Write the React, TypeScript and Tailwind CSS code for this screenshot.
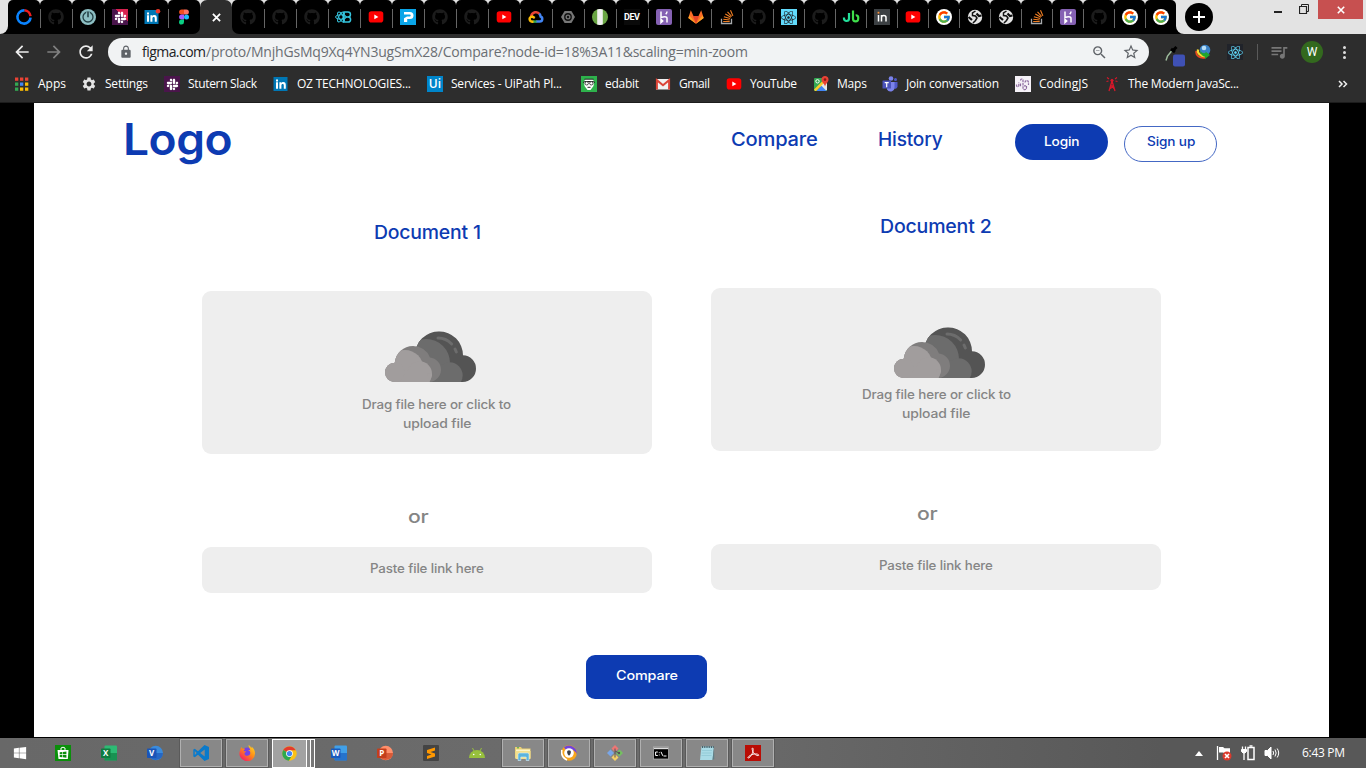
import React, { useLayoutEffect, useRef } from "react";
import { FaGithub, FaSlack, FaReact, FaWindows } from "react-icons/fa";
import { FcGoogle } from "react-icons/fc";
import { MdSettings, MdLock, MdStarBorder, MdZoomOut, MdArrowBack, MdArrowForward, MdRefresh, MdQueueMusic } from "react-icons/md";

/* Tracks a single line of text so that it fills the given width. */
function Fit({ w, className = "", children }: { w: number; className?: string; children: string }) {
  const ref = useRef<HTMLSpanElement>(null);
  useLayoutEffect(() => {
    const fit = () => {
      const el = ref.current;
      if (!el) return;
      el.style.letterSpacing = "0px";
      el.style.marginRight = "0px";
      const ls = (w - el.getBoundingClientRect().width) / Math.max(1, children.length - 1);
      el.style.letterSpacing = `${ls}px`;
      el.style.marginRight = `${-ls}px`;
    };
    fit();
    document.fonts?.ready.then(fit);
  }, [w, children]);
  return (
    <span ref={ref} className={`inline-block shrink-0 whitespace-pre ${className}`}>
      {children}
    </span>
  );
}

/* Widens the glyphs themselves, for the round geometric headings and labels. */
function Wide({ w, children }: { w: number; children: string }) {
  const ref = useRef<HTMLSpanElement>(null);
  useLayoutEffect(() => {
    const fit = () => {
      const el = ref.current;
      if (el) el.style.transform = `scaleX(${w / el.offsetWidth})`;
    };
    fit();
    document.fonts?.ready.then(fit);
  }, [w, children]);
  return (
    <span className="block shrink-0 text-left" style={{ width: w }}>
      <span ref={ref} className="inline-block origin-left whitespace-pre tracking-[-0.01em]">
        {children}
      </span>
    </span>
  );
}

const Github = () => <FaGithub className="size-4 text-[#1c1c1c]" />;
const Youtube = () => (
  <svg viewBox="0 0 16 16" className="size-4">
    <rect x="0.7" y="2.2" width="14.6" height="11.4" rx="2.8" fill="#f00" />
    <path d="M6.3 5.6 10.4 7.9 6.3 10.2Z" fill="#fff" />
  </svg>
);
const Slack = () => (
  <span className="flex size-4 items-center justify-center bg-[#4a154b]">
    <FaSlack className="size-[13px] text-white" />
  </span>
);
const SlackAlert = () => (
  <span className="flex size-4 items-center justify-center bg-[linear-gradient(45deg,#4a154b_62%,#d7224f_62%)]">
    <FaSlack className="size-[13px] text-white" />
  </span>
);
const Linkedin = ({ dot = false }: { dot?: boolean }) => (
  <svg viewBox="0 0 16 16" className="size-4 overflow-visible">
    <rect x="0.5" y="1" width="14" height="14" fill="#0077b5" />
    <path d="M3 6.3h2V12.7H3ZM3 3.4h2v2H3ZM6.4 6.3h1.9v.9c.5-.8 1.2-1.1 2-1.1 1.8 0 2.5 1.100 2.500 2.900v3.700h-2V9.500c0-1-.3-1.600-1.100-1.600-.9 0-1.300.6-1.300 1.600v3.200h-2Z" fill="#fff" />
    {dot && <circle cx="14" cy="2.300" r="2.300" fill="#ee3a2d" />}
  </svg>
);
const Figma = () => (
  <svg viewBox="0 0 16 16" className="size-4">
    <path d="M8 .6H5.600a2.500 2.500 0 0 0 0 5H8Z" fill="#f24e1e" />
    <path d="M8 .6h2.400a2.500 2.500 0 0 1 0 5H8Z" fill="#ff7262" />
    <path d="M8 5.600H5.600a2.500 2.500 0 0 0 0 5H8Z" fill="#a259ff" />
    <circle cx="10.500" cy="8.100" r="2.500" fill="#1abcfe" />
    <path d="M8 10.600H5.600a2.500 2.500 0 1 0 2.400 2.500Z" fill="#0acf83" />
  </svg>
);
const Ring = () => (
  <svg viewBox="0 0 18 18" className="size-[18px]">
    <circle cx="9" cy="9" r="6.600" fill="none" stroke="#0a84ff" strokeWidth="2.600" strokeDasharray="31 10.470" transform="rotate(5 9 9)" />
    <path d="M9.500 2.300a6.600 6.600 0 0 1 6 5.800" fill="none" stroke="#f01c1c" strokeWidth="2.600" />
  </svg>
);
const Power = () => (
  <svg viewBox="0 0 16 16" className="size-4">
    <circle cx="8" cy="8" r="8" fill="#8dbfc3" />
    <circle cx="8" cy="8" r="5" fill="none" stroke="#234146" strokeWidth="1.300" />
    <path d="M8 2.500v6" stroke="#8dbfc3" strokeWidth="3.500" />
    <path d="M8 2.800v5.500" stroke="#203b40" strokeWidth="1.500" />
  </svg>
);
const BootReact = () => (
  <svg viewBox="0 0 18 16" className="h-4 w-[18px]" fill="none" stroke="#35c4dd">
    <ellipse cx="6" cy="8" rx="5.500" ry="2.200" transform="rotate(60 6 8)" />
    <ellipse cx="6" cy="8" rx="5.500" ry="2.200" transform="rotate(-60 6 8)" />
    <ellipse cx="6" cy="8" rx="5.500" ry="2.200" />
    <path d="M8.500 3h4.500a2.400 2.400 0 0 1 0 4.900H8.500M13 7.900a2.600 2.600 0 0 1 0 5.200H8.500V3" strokeWidth="1.500" />
  </svg>
);
const Pandora = () => (
  <svg viewBox="0 0 16 16" className="size-4">
    <path d="M0 0H16V16H0Z" fill="#0aa5e8" />
    <path d="M4 3h6a3.500 3.500 0 0 1 0 7H7.200v3H4V9.300L7 7.500h2.700a1 1 0 0 0 0-2H4Z" fill="#fff" />
  </svg>
);
const CloudLogo = () => (
  <svg viewBox="0 0 16 16" className="size-4" fill="none" strokeWidth="2.500">
    <path d="M3.200 7.200C4 2.800 9.500 1.800 11.600 5.200" stroke="#ea4335" />
    <path d="M11.200 4.800C12.600 6 12.500 7 12.600 7.500 15 8.500 14.800 12.600 11.800 12.600H8" stroke="#4285f4" />
    <path d="M8.500 12.600H4.500" stroke="#34a853" />
    <path d="M5.500 12.600C.8 13 .3 7.800 4.400 7.600L6.800 9" stroke="#fbbc05" />
  </svg>
);
const Hexagon = () => (
  <svg viewBox="0 0 16 16" className="size-4">
    <path d="M4.600 2h6.800L15 8l-3.600 6H4.600L1 8Z" fill="#777" />
    <circle cx="8" cy="8" r="3.200" fill="none" stroke="#111" strokeWidth="1.400" />
    <circle cx="8" cy="8" r="1.200" fill="#111" />
  </svg>
);
const Striped = () => (
  <svg viewBox="0 0 16 16" className="size-4">
    <circle cx="8" cy="8" r="8" fill="#6aa544" />
    <path d="M5.200.5a8 8 0 0 1 5.600 0v15a8 8 0 0 1-5.600 0Z" fill="#f0f0f0" />
  </svg>
);
const Dev = () => (
  <span className="flex size-4 items-center justify-center bg-[#0a0a0a] font-['Roboto',sans-serif] text-[9px] leading-none font-bold text-white">
    <Fit w={16}>DEV</Fit>
  </span>
);
const Heroku = () => (
  <svg viewBox="0 0 16 16" className="size-4">
    <rect width="16" height="16" rx="2" fill="#8561b3" />
    <path d="M5 2.500v6c2-.8 6-1.500 6 .8v4.200M5 10.500v3l1.700-1.500ZM11 2.500c0 1.200-.5 2-1.300 2.800" stroke="#fff" strokeWidth="1.500" fill="none" />
  </svg>
);
const Gitlab = () => (
  <svg viewBox="0 0 16 16" className="size-4">
    <path d="M.3 9 2.800 1.300 5.500 7h5l2.700-5.700L15.700 9 8 14.800Z" fill="#fc6d26" />
    <path d="M5 7h6l-3 7.800Z" fill="#e24329" />
    <path d="M.3 9 1.500 6.500 8 14.800ZM15.700 9 14.500 6.500 8 14.800Z" fill="#fca326" />
  </svg>
);
const Stack = () => (
  <svg viewBox="0 0 16 16" className="size-4" fill="none">
    <path d="M2.500 9.800v4.700h10V9.800" stroke="#a7a9ab" strokeWidth="1.300" />
    <path d="M4.200 12.500h6.500M4.300 10.300l6.400.7M4.900 7.800l6.200 1.700M6.300 5.100l5.600 3.200M8.500 2.800l4.200 4.700M11.500 1.200l2.400 5.700" stroke="#f48024" strokeWidth="1.100" />
  </svg>
);
const ReactTile = () => (
  <span className="flex size-4 items-center justify-center bg-[#61dafb]">
    <FaReact className="size-[15px] text-[#20232a]" />
  </span>
);
const Ub = () => (
  <svg viewBox="0 0 18 16" className="h-4 w-[18px]" fill="none" strokeWidth="2.200">
    <path d="M2 8.500v1a2.500 2.500 0 0 0 5 0V4" stroke="#23e09b" />
    <path d="M11 1.500v8.200a2.600 2.600 0 0 0 5.200 0V8a2 2 0 0 0-2.500-1.500" stroke="#3fdf4b" />
  </svg>
);
const In = () => (
  <svg viewBox="0 0 16 16" className="size-4" fill="none">
    <rect width="16" height="16" fill="#3c4043" />
    <path d="M4.500 6v6.500M7.500 12.500V6M7.500 8.500c0-2.800 4.500-2.800 4.500 0v4" stroke="#fff" strokeWidth="1.500" />
    <rect x="3.600" y="2.800" width="1.800" height="1.800" fill="#f48c36" />
  </svg>
);
const Google = () => (
  <span className="flex size-4 items-center justify-center rounded-full bg-white">
    <FcGoogle className="size-[14px]" />
  </span>
);
const Globe = () => (
  <svg viewBox="0 0 16 16" className="size-4">
    <circle cx="8" cy="8" r="7.200" fill="#e4e4e4" />
    <path d="M8.500 2 5.500 4v2.500l3 .5 1.500 2-1.500 2.500L6 14" stroke="#111" strokeWidth="1.500" fill="none" />
    <path d="M9.500 4.500 12 7l2.500-.5M1.500 8 5 11" stroke="#111" strokeWidth="2.200" fill="none" />
  </svg>
);

const G = Github;
const wideTabs = [Ring, G, Power, SlackAlert, () => <Linkedin dot />, Figma, null, G, G, G, BootReact, Youtube, Pandora, G, G, Youtube, CloudLogo, Hexagon, Striped, Dev, Heroku];
const slimTabs = [Gitlab, Stack, G, ReactTile, G, Ub, In, Youtube, Google, Globe, Globe, Stack, Heroku, G, Google, Google];

function Tab({ icon: Icon, slim, sep, corner = "" }: { icon: React.FC | null; slim?: boolean; sep: boolean; corner?: string }) {
  const width = slim ? "w-[31px]" : "w-8";
  if (!Icon)
    return (
      <div className={`flex h-[34px] shrink-0 items-center justify-center rounded-t-[7px] bg-[#2d2d2d] ${width}`}>
        <svg viewBox="0 0 10 10" className="ml-px size-[9px]" stroke="#fff" strokeWidth="2">
          <path d="M1 1 9 9M9 1 1 9" />
        </svg>
      </div>
    );
  return (
    <div className={`relative flex h-[34px] shrink-0 items-center justify-center rounded-t-[5px] bg-black ${width} ${corner}`}>
      <Icon />
      {sep && <span className="absolute top-[9px] right-[-1px] z-10 h-[19px] w-px bg-[#666]" />}
    </div>
  );
}

function TabStrip() {
  return (
    <div className="flex h-[34px] shrink-0 items-start bg-[#e3e3e3]">
      <div className="h-[34px] w-2 bg-black"><div className="h-full rounded-br-[8px] bg-[#e3e3e3]" /></div>
      <div className="flex">
        {wideTabs.map((I, i) => (
          <div key={i} className={i === 5 || i === 7 ? "bg-[linear-gradient(#e3e3e3_12px,#2d2d2d_12px)]" : "bg-[linear-gradient(#e3e3e3_12px,#000_12px)]"}>
            <Tab icon={I} sep={i !== 5 && i !== 6} corner={i === 5 ? "rounded-br-[7px]" : i === 7 ? "rounded-bl-[7px]" : ""} />
          </div>
        ))}
        {slimTabs.map((I, i) => (
          <Tab key={i} icon={I} slim sep={i !== 15} />
        ))}
      </div>
      <div className="h-[34px] w-[9px] bg-black"><div className="h-full rounded-bl-[8px] bg-[#e3e3e3]" /></div>
      <div className="mt-[3px] flex size-7 items-center justify-center rounded-full bg-black">
        <svg viewBox="0 0 12 12" className="size-3" stroke="#fff" strokeWidth="2"><path d="M6 0V12M0 6H12" /></svg>
      </div>
      <div className="ml-[61px] h-[13px] w-2 border-b-2 border-[#222]" />
      <svg viewBox="0 0 10 10" className="mt-1 ml-[17px] size-[10px]" fill="none" stroke="#222">
        <path d="M2.500 2V.5h7v7H8" /><path d="M.5 2.500h7v7h-7Z" strokeWidth="1.200" />
      </svg>
      <div className="ml-[9px] flex h-[19px] w-[45px] items-center justify-center bg-[#c75050]">
        <svg viewBox="0 0 10 10" className="size-2" stroke="#fff" strokeWidth="2"><path d="M1 1 9 9M9 1 1 9" /></svg>
      </div>
    </div>
  );
}

function Toolbar() {
  return (
    <div className="flex h-9 items-center">
      <MdArrowBack className="ml-3 size-5 text-[#eee]" />
      <MdArrowForward className="ml-3 size-5 text-[#808080]" />
      <MdRefresh className="ml-3 size-5 text-[#eee]" />
      <div className="ml-3 flex h-7 w-[1041px] items-center rounded-full bg-[#f1f3f4]">
        <MdLock className="ml-[11px] size-[14px] text-[#5f6368]" />
        <div className="ml-[9px] flex font-['Open_Sans','Noto_Sans',sans-serif] text-[14px] leading-7">
          <Fit w={64} className="text-[#202124]">figma.com</Fit>
          <Fit w={542} className="text-[#6a6e73]">/proto/MnjhGsMq9Xq4YN3ugSmX28/Compare?node-id=18%3A11&scaling=min-zoom</Fit>
        </div>
        <MdZoomOut className="ml-auto size-[17px] text-[#5f6368]" />
        <MdStarBorder className="mr-[9px] ml-[14px] size-[18px] text-[#5f6368]" />
      </div>
      <div className="ml-4 flex w-5 items-end self-stretch pb-[2px]">
        <svg viewBox="0 0 20 22" className="h-[22px] w-5">
          <rect x="8" y="8.500" width="12" height="12" rx="2" fill="#3f51b5" />
          <path d="M1 14.500 2.500 10 7 4.500" stroke="#9dbb9c" strokeWidth="1.500" fill="none" />
          <path d="M6 3l4 3M8 4.500 11.500 1" stroke="#000" strokeWidth="3" />
        </svg>
      </div>
      <svg viewBox="0 0 16 16" className="ml-[10px] size-4">
        <circle cx="10" cy="6" r="5.300" fill="#3980c4" /><circle cx="9" cy="4" r="2.300" fill="#b5dcf5" />
        <path d="M1.300 7c-1 5 4 7.500 9 6.500" stroke="#e74a1f" strokeWidth="1.800" fill="none" />
        <path d="M3 5.500c-1 4 3 7 7 6.500" stroke="#f2dc32" strokeWidth="2.200" fill="none" />
        <path d="M5.500 6c.5 3 3 3.500 5 3V7.500l4.500 3.500-5 4v-2.200C7 12 5 9.500 5.500 6Z" fill="#20a52e" />
      </svg>
      <span className="ml-4 flex size-4 items-center justify-center bg-[#20232a]"><FaReact className="size-[15px] text-[#61dafb]" /></span>
      <div className="ml-[14px] h-4 w-px bg-[#5a5a5a]" />
      <MdQueueMusic className="ml-[11px] size-5 text-[#777]" />
      <div className="ml-[12px] flex size-[22px] items-center justify-center rounded-full bg-[#33691e] font-['Roboto',sans-serif] text-[12px] text-white">W</div>
      <div className="ml-[20px] flex flex-col gap-[2px]">
        <span className="size-[3px] rounded-full bg-[#ddd]" /><span className="size-[3px] rounded-full bg-[#ddd]" /><span className="size-[3px] rounded-full bg-[#ddd]" />
      </div>
    </div>
  );
}

const AppsIcon = () => (
  <svg viewBox="0 0 16 16" className="size-4">
    {["#ea4335", "#ea4335", "#ea4335", "#34a853", "#4285f4", "#fbbc05", "#34a853", "#fbbc05", "#fbbc05"].map((c, i) => (
      <rect key={i} x={1 + (i % 3) * 5} y={1.5 + Math.floor(i / 3) * 5} width="3.300" height="3.300" fill={c} />
    ))}
  </svg>
);
const UiPath = () => (
  <span className="flex size-4 items-center justify-center bg-[#0085ca] font-['Open_Sans',sans-serif] text-[12px] leading-none font-semibold text-white">Ui</span>
);
const Edabit = () => (
  <svg viewBox="0 0 16 16" className="size-4">
    <rect width="16" height="16" fill="#2eb24c" />
    <path d="M3 5.500 4.500 3h7L13 5.500 12.500 10 9.500 14h-3L3.500 10Z" fill="#fff" />
    <path d="M2 6.500 4 5.500h8l2 1M3.500 3.200h9" stroke="#222" fill="none" />
    <circle cx="5.700" cy="7.300" r="1.700" fill="#fff" stroke="#222" strokeWidth=".8" /><circle cx="10.300" cy="7.300" r="1.700" fill="#fff" stroke="#222" strokeWidth=".8" />
    <path d="M6.500 11.300h3" stroke="#222" />
  </svg>
);
const Gmail = () => (
  <svg viewBox="0 0 16 16" className="size-4">
    <path d="M1 3h14v10.500H1Z" fill="#f2f2f2" />
    <path d="M1.900 13.500V4.200L8 9.200l6.100-5v9.300" fill="none" stroke="#dc4437" strokeWidth="2" />
  </svg>
);
const Maps = () => (
  <svg viewBox="0 0 16 16" className="size-4">
    <rect x="1" y="2" width="13" height="13" rx="1" fill="#34a853" />
    <path d="M8 8 14 3v11l-2 1-5-5Z" fill="#e8e8e8" /><path d="M3.500 15 8.500 9.700l5 5.300Z" fill="#4285f4" /><path d="M1 13.500 11 3.500l1.500 2L3.200 15H2Z" fill="#fbcb2f" />
    <circle cx="4.500" cy="5.300" r="1.700" fill="none" stroke="#fff" />
    <path d="M12 0a3.500 3.500 0 0 0-3.500 3.700C8.500 6 11 7 12 10.500c1-3.500 3.500-4.500 3.500-6.800A3.500 3.500 0 0 0 12 0Z" fill="#e94235" /><circle cx="12" cy="3.600" r="1.300" fill="#8b1a13" />
  </svg>
);
const Teams = () => (
  <svg viewBox="0 0 16 16" className="size-4">
    <circle cx="9" cy="2.500" r="2.300" fill="#7b83eb" /><circle cx="13.500" cy="3.500" r="1.500" fill="#5059c9" />
    <path d="M11 6h4.500v4.500a2.500 2.500 0 0 1-3.500 2Z" fill="#5059c9" /><path d="M5 6h7.500v5.500a4 4 0 0 1-7.500 2Z" fill="#7b83eb" />
    <rect x=".5" y="4.500" width="8.500" height="8" rx=".6" fill="#4b53bc" /><path d="M2.700 6.700h4M4.700 6.700v4.500" stroke="#fff" strokeWidth="1.200" />
  </svg>
);
const CodingJs = () => (
  <svg viewBox="0 0 16 16" className="size-4">
    <rect width="16" height="16" fill="#f5f1f7" />
    <path d="M1.500 8.500v1c0 1.500 2.300 1.500 2.300 0V6.500M5.500 4.500c0-2 2.500-2 2.500 0v7c0 3 3.500 3 3.500 0V9.800H9M10 6.500c0-2.500 3.500-2.500 3.500 0V9M5.500 7.500V11" fill="none" stroke="#8b6a9e" strokeWidth="1.200" strokeDasharray="2.500 .7" />
  </svg>
);
const Tower = () => (
  <svg viewBox="0 0 16 16" className="size-4" fill="none" stroke="#d6182a">
    <path d="M8 5 5 15M8 5l3 10M6.300 10h3.400M5.500 13l4.500-3M10.500 13 6.500 9" strokeWidth="1.300" />
    <circle cx="8" cy="4.500" r="1.200" fill="#d6182a" />
    <path d="M4.500 5 2.500 5.500M5 3 3 1.500M11.500 5l2 .5M11 3l2-1.500" strokeWidth="1.100" />
  </svg>
);

const bookmarks: [React.FC, string, number, string][] = [
  [AppsIcon, "Apps", 28, "w-[67px]"],
  [() => <MdSettings className="size-4 text-[#e4e4e4]" />, "Settings", 43, "w-[83px]"],
  [Slack, "Stutern Slack", 69, "w-[109px]"],
  [Linkedin as React.FC, "OZ TECHNOLOGIES...", 114, "w-[154px]"],
  [UiPath, "Services - UiPath Pl...", 111, "w-[154px]"],
  [Edabit, "edabit", 34, "w-[74px]"],
  [Gmail, "Gmail", 31, "w-[71px]"],
  [Youtube, "YouTube", 47, "w-[87px]"],
  [Maps, "Maps", 30, "w-[69px]"],
  [Teams, "Join conversation", 93, "w-[133px]"],
  [CodingJs, "CodingJS", 49, "w-[89px]"],
  [Tower, "The Modern JavaSc...", 111, "w-[199px]"],
];

function Bookmarks() {
  return (
    <div className="flex h-7 items-center pl-[14px] font-['Open_Sans','Noto_Sans',sans-serif] text-[12px] text-white">
      {bookmarks.map(([Icon, label, w, cell]) => (
        <div key={label} className={`flex shrink-0 items-center gap-2 ${cell}`}>
          <Icon />
          <Fit w={w}>{label}</Fit>
        </div>
      ))}
      <svg viewBox="0 0 10 8" className="ml-[35px] h-2 w-[10px]" fill="none" stroke="#eee" strokeWidth="1.500"><path d="M1 1 4 4 1 7M5.500 1l3 3-3 3" /></svg>
    </div>
  );
}

function Clouds({ id }: { id: string }) {
  return (
    <svg viewBox="135 62 273 153" className="h-[51px] w-[91px]">
      <defs>
        <clipPath id={`${id}-back`}><circle cx="297" cy="135" r="72" /><circle cx="368" cy="175" r="40" /><rect x="200" y="140" width="168" height="75" /></clipPath>
        <clipPath id={`${id}-front`}><circle cx="219" cy="162" r="55" /><circle cx="266" cy="178" r="37" /><circle cx="164" cy="186" r="29" /><rect x="164" y="175" width="103" height="40" /></clipPath>
      </defs>
      <g clipPath={`url(#${id}-back)`}>
        <rect x="135" y="62" width="273" height="153" fill="#545454" />
        <circle cx="258" cy="158" r="72" fill="#6c6c6c" /><circle cx="329" cy="195" r="39" fill="#6c6c6c" />
        <path d="M294 83q24 0 41 18" stroke="#6c6c6c" strokeWidth="9" strokeLinecap="round" fill="none" />
        <path d="M345 116l4 9" stroke="#6c6c6c" strokeWidth="9" strokeLinecap="round" />
      </g>
      <g clipPath={`url(#${id}-front)`}>
        <rect x="135" y="62" width="273" height="153" fill="#7f7d7d" />
        <g fill="#a19d9d"><circle cx="195" cy="174" r="55" /><circle cx="239" cy="190" r="37" /><rect x="135" y="180" width="128" height="35" /><circle cx="164" cy="186" r="30" /></g>
        <path d="M276 190v5l-7 20H262V190Z" fill="#a19d9d" />
      </g>
    </svg>
  );
}

function LinkField() {
  return (
    <>
      <div className="mt-[53px] flex justify-center pr-[19px] text-[18px] leading-5 font-medium text-[#858585]"><Wide w={20}>or</Wide></div>
      <div className="mt-[20px] flex h-[46px] justify-center rounded-[9px] bg-[#eee] pt-[13px] text-[12.5px] leading-[18px] font-medium text-[#858585]"><Wide w={114}>Paste file link here</Wide></div>
    </>
  );
}

function Document1() {
  return (
    <section className="w-[450px] pt-[37px]">
      <div className="flex justify-center text-[18.5px] leading-[20px] font-medium text-[#0d3bb2]"><Wide w={107}>Document 1</Wide></div>
      <div className="mt-[49px] flex h-[163px] flex-col items-center rounded-[9px] bg-[#eee] pt-[40px]">
        <div className="pl-[7px]"><Clouds id="one" /></div>
        <div className="mt-[13px] flex flex-col items-center pl-[19px] text-[12.5px] leading-[19px] font-medium text-[#858585]">
          <Wide w={149}>Drag file here or click to</Wide><Wide w={68}>upload file</Wide>
        </div>
      </div>
      <LinkField />
    </section>
  );
}

function Document2() {
  return (
    <section className="w-[450px] pt-[31px]">
      <div className="flex justify-center text-[18.5px] leading-[20px] font-medium text-[#0d3bb2]"><Wide w={112}>Document 2</Wide></div>
      <div className="mt-[51.5px] flex h-[163px] flex-col items-center rounded-[9px] bg-[#eee] pt-[39px]">
        <div className="pl-[6px]"><Clouds id="two" /></div>
        <div className="mt-[7px] flex flex-col items-center text-[12.5px] leading-[19px] font-medium text-[#858585]">
          <Wide w={149}>Drag file here or click to</Wide><Wide w={68}>upload file</Wide>
        </div>
      </div>
      <LinkField />
    </section>
  );
}

function ComparePage() {
  return (
    <main className="mr-[37px] ml-[34px] h-[634px] shrink-0 bg-white font-['Inter',sans-serif] text-[#0d3bb2]">
      <header className="flex h-[82px] items-start pl-[89px] font-medium">
        <div className="mt-[14px] text-[44px] leading-none font-semibold"><Wide w={109}>Logo</Wide></div>
        <nav className="mt-[26px] ml-[499px] flex gap-[60px] text-[18.5px] leading-[20px]">
          <Wide w={87}>Compare</Wide><Wide w={64}>History</Wide>
        </nav>
        <button className="mt-[21px] ml-[73px] flex h-9 w-[93px] items-center justify-center rounded-[18px] bg-[#0d3bb2] text-[12.5px] text-white"><Wide w={35}>Login</Wide></button>
        <button className="mt-[23px] ml-4 flex h-9 w-[93px] items-center justify-center rounded-[18px] border border-[#4468c4] pb-[3px] text-[12.5px]"><Wide w={48}>Sign up</Wide></button>
      </header>
      <div className="flex h-[470px] gap-[59px] pl-[168px]"><Document1 /><Document2 /></div>
      <button className="ml-[552px] flex h-11 w-[121px] items-center justify-center rounded-[9px] bg-[#0d3bb2] pb-[2px] text-[12.5px] font-medium text-white"><Wide w={62}>Compare</Wide></button>
    </main>
  );
}

const Office = ({ letter, base, light, round }: { letter: string; base: string; light: string; round?: boolean }) => (
  <svg viewBox="0 0 16 16" className="size-4">
    <rect x={round ? 1.5 : 3.5} y={round ? 0.8 : 0.5} width={round ? 14.5 : 12.5} height={round ? 14.5 : 15} rx={round ? 7.3 : 1} fill={light} />
    <path d={round ? "M9 8h7a7.200 7.200 0 0 1-14 2Z" : "M3.500 8H16v7.500H3.500Z"} fill={base} opacity=".65" />
    <rect x="0" y="3.500" width="9.500" height="9.500" rx=".8" fill={base} />
    <text x="4.700" y="11.200" textAnchor="middle" fontFamily="Open Sans" fontWeight="700" fontSize="8" fill="#fff">{letter}</text>
  </svg>
);
const Store = () => (
  <svg viewBox="0 0 16 16" className="size-4">
    <rect width="16" height="16" fill="#0a8f0a" /><path d="M2.500 5h11l-.7 9H3.500Z" fill="#fff" /><path d="M6 5V3q2-1.600 4 0v2" stroke="#fff" fill="none" />
    <path d="M4.700 7.300 7.300 7v2.300H4.700ZM7.900 6.900l3.500-.4v2.800H7.900ZM4.700 9.900h2.600v2.300l-2.600-.3ZM7.900 9.900h3.500v2.800l-3.500-.4Z" fill="#0a8f0a" />
  </svg>
);
const VsCode = () => (
  <svg viewBox="0 0 16 16" className="size-4"><path d="M11.500 0 16 2v12l-4.500 2L5 9.800 1.800 12.300.3 11.500V4.500l1.500-.8L5 6.200ZM11.700 4.500 7.200 8l4.500 3.500ZM1.800 6v4L3.700 8Z" fill="#0a7acb" fillRule="evenodd" /></svg>
);
const Firefox = () => (
  <svg viewBox="0 0 16 16" className="size-4">
    <defs><linearGradient id="fx" x1="1" y1="0" x2="0.200" y2="1"><stop offset="0" stopColor="#ffe226" /><stop offset=".5" stopColor="#ff8a16" /><stop offset="1" stopColor="#f5156c" /></linearGradient></defs>
    <circle cx="8" cy="8.500" r="6" fill="#7542e5" />
    <path d="M9.500 0c2 1 2 2.300 3.200 3 0-.5 0-.9-.3-1.500C15 3.500 16 6 16 8.300A7.800 7.800 0 1 1 1.200 5c.2-1.500 1-2.500 1.700-3 0 .8.100 1.300.5 1.700.9-.4 1.800-.2 2.700.2C5 4.600 4.400 5.600 4.800 6.200H7c.2.7-1.300 1.300-1.600 2.200.2 2 2 2.800 3.800 2.200 3.300-1.200 2.300-5-.2-5.600 1-.2 1.600 0 2.300.3C11 3.500 9.500 2 9.500 0Z" fill="url(#fx)" />
  </svg>
);
const Chrome = () => (
  <svg viewBox="0 0 16 16" className="size-[15px]">
    <circle cx="8" cy="8" r="7.700" fill="#fbc116" /><path d="M8 8 1.300 4.200A7.700 7.700 0 0 1 14.700 4.500H8Z" fill="#e33b2e" /><path d="M1.300 4.200A7.700 7.700 0 0 0 7.300 15.700L11 9.700 8 8Z" fill="#2da94f" />
    <circle cx="8" cy="8" r="3.600" fill="#fff" /><circle cx="8" cy="8" r="2.800" fill="#4285f4" />
  </svg>
);
const Sublime = () => (
  <svg viewBox="0 0 16 16" className="size-4"><rect width="16" height="16" rx="1" fill="#444" /><path d="M12 2.500v3L7.500 7 12 8.500v3L4 14v-3l4.500-1.500L4 8V5Z" fill="#ff9800" /></svg>
);
const Droid = () => (
  <svg viewBox="0 0 16 12" className="h-3 w-4"><path d="M0 11a8 8 0 0 1 16 0Z" fill="#97c03d" /><path d="M3.500 1 5 4M12.500 1 11 4" stroke="#97c03d" /><circle cx="4.700" cy="7.500" r=".8" fill="#fff" /><circle cx="11.300" cy="7.500" r=".8" fill="#fff" /></svg>
);
const Explorer = () => (
  <svg viewBox="0 0 16 16" className="size-4"><path d="M0 2h6l1 1.500h8.500V13H0Z" fill="#e9cf73" /><path d="M1 4.500h14V6H1Z" fill="#fdf5c8" /><path d="M.5 6h15v8H.5Z" fill="#f4e08e" /><path d="M3 15.500V9.500q0-1.500 1.500-1.500h8q1.500 0 1.500 1.500v6h-2.800V12H5.800v3.500Z" fill="#5cb4dd" stroke="#d5effa" strokeWidth=".6" /><path d="M2 2.800h2" stroke="#3ba94b" /></svg>
);
const Avast = () => (
  <svg viewBox="0 0 16 16" className="size-4"><circle cx="8" cy="8" r="7.800" fill="#f8a51b" /><path d="M3 2.300A7.800 7.800 0 0 1 15.700 9C14 4.500 9 3 5 5Z" fill="#7044dc" /><path d="M.9 5C0 9 2 13 6 15" stroke="#fff" strokeWidth="1.600" fill="none" /><circle cx="8" cy="8" r="4.800" fill="#fff" /><path d="M8 5.200q1.900 0 1.900 1.600c0 2-1 3.200-1.900 4-.9-.8-1.900-2-1.900-4Q6.100 5.200 8 5.200Z" fill="#3c4048" /></svg>
);
const Git = () => (
  <svg viewBox="0 0 16 16" className="size-4"><path d="m8 0 3.500 3.500L8 7 4.500 3.500Z" fill="#ee7674" /><path d="M3.500 4.500 7 8l-3.500 3.500L0 8Z" fill="#79a6e8" /><path d="M12.500 4.500 16 8l-3.500 3.500L9 8Z" fill="#74c260" /><path d="m8 9 3.500 3.500L8 16l-3.500-3.500Z" fill="#f4cf66" /><path d="M8 3.500v9M8 6l4 2" stroke="#555" /><circle cx="12" cy="8" r="1.200" fill="#555" /></svg>
);
const Cmd = () => (
  <svg viewBox="0 0 16 16" className="size-4"><rect x=".5" y="2" width="15" height="12" fill="#000" stroke="#bbb" strokeWidth=".7" /><path d="M.8 3.300h14.400" stroke="#ddd" strokeWidth="1.800" /><path d="M4.800 7H2.600v3.500h2.200M6.300 7.300v.8M6.300 9.600v.8M8 6.800l1.800 4M10.500 11h3" stroke="#fff" strokeWidth="1" fill="none" /></svg>
);
const Notepad = () => (
  <svg viewBox="0 0 16 16" className="size-4"><path d="M2.500 1.500H15l-1.500 13.500H1Z" fill="#a9dbe6" /><path d="M15 1.500 13.500 15l1.800-1Z" fill="#5f7f87" /><path d="M3 2h12" stroke="#47616a" strokeWidth="2" strokeDasharray="1 .8" /><path d="M3 5.500h10M2.700 8h10M2.500 10.500h10" stroke="#88c2cf" strokeWidth=".6" /></svg>
);
const Acrobat = () => (
  <svg viewBox="0 0 16 16" className="size-4"><rect width="16" height="16" fill="#b90d05" /><path d="M7.500 3c1.200 0 .7 3.500-.5 6-1 2-3 4.500-4 4-1-.8 3-3.500 6-4 2-.3 5 0 4.700 1.300C13.300 11.500 9 9.500 8 7 7.200 5 6.700 3 7.500 3Z" fill="none" stroke="#fff" strokeWidth=".9" /></svg>
);

const pinned: [React.FC, boolean][] = [
  [Store, false],
  [() => <Office letter="X" base="#107c41" light="#2dbb74" />, false],
  [() => <Office letter="V" base="#1a55b8" light="#3a8bdc" round />, false],
  [VsCode, true],
  [Firefox, true],
  [Chrome, true],
  [() => <Office letter="W" base="#185abd" light="#41a0e8" />, false],
  [() => <Office letter="P" base="#c43e1c" light="#ff8f6b" round />, false],
  [Sublime, false],
  [Droid, false],
  [Explorer, true],
  [Avast, true],
  [Git, true],
  [Cmd, true],
  [Notepad, true],
  [Acrobat, true],
];

function Taskbar() {
  return (
    <footer className="flex h-[31px] items-center border-t border-black bg-[linear-gradient(90deg,#686868,#6c6c6c_50%,#585858_85%)]">
      <div className="flex w-10 justify-center pr-[1px]"><FaWindows className="size-[14px] text-white" /></div>
      {pinned.map(([Icon, open], i) => (
        <div key={i} className="flex h-[30px] w-[46px] shrink-0 items-center justify-center">
          {Icon === Chrome ? (
            <div className="flex h-[29px] w-[43px]">
              <div className="flex h-full w-[35px] items-center justify-center border border-white bg-[#a2a2a2]"><Chrome /></div>
              <div className="h-full w-1 border border-l-0 border-white bg-[#888]" />
              <div className="h-full w-1 border border-l-0 border-white bg-[#777]" />
            </div>
          ) : (
            <div className={open ? "flex h-[28px] w-[42px] items-center justify-center border border-[#b0b0b0] bg-[#888] outline outline-[#5a5a5a]" : ""}><Icon /></div>
          )}
        </div>
      ))}
      <div className="ml-auto flex items-center pr-[21px]">
        <svg viewBox="0 0 8 5" className="mr-[13px] h-[5px] w-2"><path d="M0 5 4 0 8 5Z" fill="#fff" /></svg>
        <svg viewBox="0 0 16 16" className="mr-[8px] size-4">
          <path d="M1.500 1v14" stroke="#fff" strokeWidth="1.300" /><path d="M3 2h4l1.500 1.300H14v5H8.500L7 7.500H3Z" fill="#fff" />
          <circle cx="11" cy="11" r="4.500" fill="#dc3a2c" /><path d="M9 9l4 4M13 9l-4 4" stroke="#fff" strokeWidth="1.600" />
        </svg>
        <svg viewBox="0 0 16 16" className="mr-[8px] size-4" fill="none" stroke="#fff">
          <rect x="8" y="2.500" width="6" height="12" strokeWidth="1.500" /><path d="M9.500 1h3" strokeWidth="1.500" /><path d="M2.500 1.500v3M5.500 1.500v3M4 8v7" strokeWidth="1.300" /><path d="M1.500 4.500h5v2L5 8H3L1.500 6.500Z" fill="#fff" />
        </svg>
        <svg viewBox="0 0 16 16" className="mr-[22px] size-4" fill="none" stroke="#fff">
          <path d="M1 5.500h2.500L7 2v12l-3.500-3.500H1Z" fill="#fff" /><path d="M9 6q1.200 2 0 4M11 4.500q2.300 3.500 0 7M13.200 3.500q3 4.500 0 9" />
        </svg>
        <div className="flex font-['Open_Sans','Noto_Sans',sans-serif] text-[12px] text-white"><Fit w={43}>6:43 PM</Fit></div>
      </div>
    </footer>
  );
}

export default function App() {
  return (
    <div className="flex h-[768px] w-[1366px] flex-col overflow-hidden bg-black">
      <TabStrip />
      <div className="h-[69px] shrink-0 border-b border-[#1c1c1c] bg-[#2d2d2d]">
        <Toolbar />
        <Bookmarks />
      </div>
      <ComparePage />
      <Taskbar />
    </div>
  );
}
